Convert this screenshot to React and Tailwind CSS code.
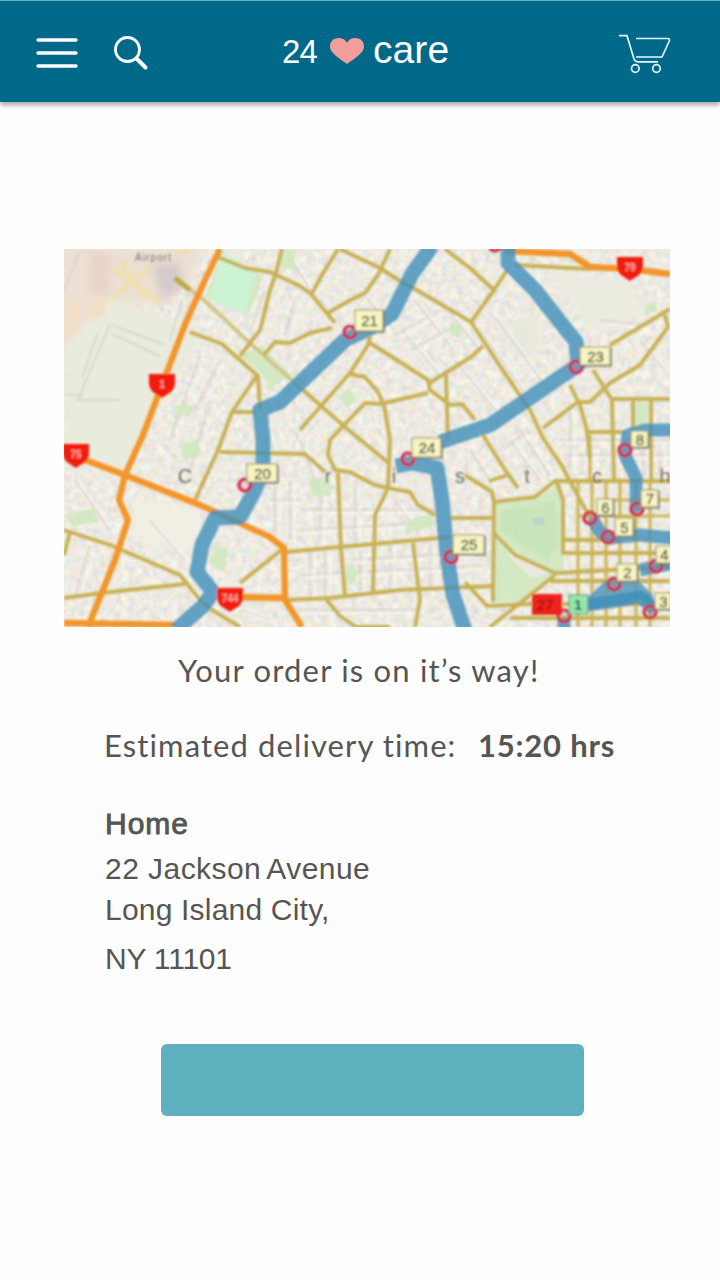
import React from "react";

const streets = [
  "M218 257L245 268L270 272L300 286L311 294L335 323",
  "M190 332L222 344L240 360L258 376L260 410",
  "M240 356L260 330L270 290L276 273L282 249",
  "M258 374L232 412L218 450L195 500",
  "M232 412H256",
  "M340 249L380 268L400 281L420 292L471 322",
  "M390 249L378 275L365 293L345 303L328 313",
  "M338 249L322 275L312 293",
  "M264 355L275 342L290 343L310 333L332 328",
  "M370 336L368 345L350 373L320 407L300 430",
  "M370 343L400 362L428 380L430 390L450 405L462 404L475 420",
  "M428 384L471 357L483 346",
  "M446 375L448 440",
  "M350 374L365 377L378 392L384 405L390 440L388 488L375 515L373 592",
  "M428 393L380 404L365 403L345 424L330 440L328 455L335 470L350 472L375 485L388 488L410 492L418 505L435 515",
  "M303 390L345 427L390 464",
  "M445 249L470 268L494 290L471 322L500 366L530 410L543 438L562 466L580 500L592 520",
  "M494 290L507 270",
  "M515 265L590 269",
  "M610 345L665 312L670 309",
  "M665 315L668 327L640 365L610 383L590 402L578 402L543 428",
  "M593 370L612 400L614 481",
  "M570 385L580 405L587 430L590 460",
  "M613 399H670", "M633 400V430", "M651 400V480", "M585 432H625",
  "M64 530L110 545L180 575L200 600L212 610L240 627",
  "M64 598L110 592L185 584",
  "M220 452L305 454L325 472",
  "M64 555L70 532",
  "M240 583L285 547",
  "M338 473L341 550L345 595",
  "M285 552L340 547L450 537",
  "M285 600L330 598L400 590L493 586",
  "M413 543L420 600L415 627",
  "M325 598L340 616L356 627H390",
  "M450 518H494",
  "M483 435L505 470L518 488",
  "M489 481L508 475",
  "M465 475L492 492L494 502L493 602",
  "M494 502L535 497L555 481H670",
  "M493 532L515 555L555 573L670 567",
  "M555 575L520 603L490 627",
  "M465 582L487 606L530 604H670",
  "M557 483L563 500V553H670",
  "M563 540H620", "M550 581H670", "M510 618H670",
];

const gridStreets = "M578 482V627M592 482V627M606 482V627M620 482V627M636 482V627M650 482V627M590 435V482M600 500H670M578 516H670";

const laneways =
  "M285 249L310 290M300 440L322 500M360 290L395 330M402 330L440 375M400 410L435 430M300 510H440M300 530L440 522M350 560L470 553M300 575L480 566M310 550V598M325 550V598M360 550V592M390 545V590M430 540V588M395 500L420 535M455 360L500 415M480 330L530 400M490 310L545 385M500 450L530 430M470 450L490 480M510 440L540 480M520 430L550 475M570 410V470M600 380L640 410M640 340L665 370M600 320L640 325M150 520L185 560M75 480L110 530M90 545L75 595M120 590L160 615M210 400L190 470M200 355L170 440M220 360L195 410M265 290L250 330M295 300L285 335M320 300L350 325M560 440H670M565 455H670M625 440V480M643 440V480M660 440V480M640 400V430M440 300L480 350M415 300L450 345M395 335L440 310M410 350L455 325M475 300L510 330M520 395L560 370M275 480V535M290 480V540M270 500H300M320 480V540M355 480V545M580 490L560 500M500 610L540 625M440 600L490 620M240 610L270 620M300 610H420";

const orangeRoads = [
  "M220 249L204 282L186 322L162 385L143 435L125 475L119 500L128 520L115 560L88 627",
  "M64 452L125 475L200 505L270 537L284 548L285 600L302 627",
  "M230 597L285 598",
  "M64 623L175 625",
  "M505 251L570 254L590 267L630 269L670 274",
];

const routes = [
  "M432 246L412 274L392 314L372 327L345 340L280 402L260 410L263 440L263 470L255 490L240 517L215 518L202 545L197 572L213 592L203 606L176 630",
  "M508 246V263L535 290L576 342L578 365L490 425L440 442",
  "M396 466L412 463L437 468L442 500L447 555L453 595L465 630",
];

const cityRoutes = [
  "M672 430L645 430L628 435L625 455L636 478V512",
  "M592 518L600 532L610 538L640 535L672 538",
  "M578 606L610 602L640 597L655 610",
  "M640 570L670 564",
  "M564 618V630",
];

const greens = [
  "M222 252L240 262L262 276L255 300L248 314L225 308L206 296Z",
  "M240 355L262 346L276 360L292 375L270 388L262 374Z",
  "M496 504L535 499L557 485L563 504V570L520 602H495Z",
  "M281 249H296L294 270L280 266Z",
  "M338 396L350 388L357 400L347 408Z",
  "M308 478H330V496H312Z",
  "M408 520L430 514L436 526L405 534Z",
  "M634 402H648V428H634Z",
  "M64 515L95 508L98 522L72 526Z",
  "M180 444L198 440L202 455L184 460Z",
  "M214 545L228 550L224 572L210 565Z",
  "M350 562L358 572L352 586L342 580Z",
  "M176 405H195L190 416H176Z",
  "M644 305L655 302L657 310L646 314Z",
  "M450 322L462 326L460 338L450 335Z",
];

const stops = [
  [350, 332], [576, 367], [408, 459], [245, 485], [451, 557], [625, 450], [637, 509],
  [590, 518], [608, 537], [656, 566], [614, 584], [650, 612], [564, 616], [495, 245],
];

const labels = [
  ["21", 355, 310, 29, 22], ["23", 580, 347, 31, 19], ["24", 412, 438, 30, 20],
  ["20", 247, 464, 31, 19], ["25", 453, 535, 32, 20], ["8", 631, 431, 18, 17],
  ["7", 641, 490, 18, 18], ["6", 597, 499, 17, 17], ["5", 615, 518, 19, 19],
  ["2", 617, 564, 21, 18], ["3", 655, 593, 17, 17], ["4", 656, 546, 17, 18],
];

const shields = [["1", 162, 384], ["79", 630, 267], ["75", 76, 454], ["744", 230, 598]];

const places = [["C", 185], ["r", 328], ["i", 394], ["s", 460], ["t", 527], ["c", 597], ["h", 665]];

function RouteMap() {
  return (
    <svg viewBox="64 249 606 378" className="block h-[378px] w-[606px]" role="img">
      <defs>
        <filter id="soft" filterUnits="userSpaceOnUse" x="44" y="229" width="646" height="418">
          <feGaussianBlur stdDeviation="1.15" />
        </filter>
        <filter id="haze" filterUnits="userSpaceOnUse" x="44" y="229" width="646" height="418">
          <feGaussianBlur stdDeviation="4" />
        </filter>
        <filter id="speckle" filterUnits="userSpaceOnUse" x="44" y="229" width="646" height="418">
          <feTurbulence type="fractalNoise" baseFrequency="0.14" numOctaves="2" seed="8" />
          <feColorMatrix values="0.5 0.1 0 0 0.57  0.1 0.42 0 0 0.59  0.1 0.15 0.5 0 0.42  0 0 0 0 1" />
        </filter>
      </defs>
      <rect x="64" y="249" width="606" height="378" fill="#e9e6d9" />
      <rect x="64" y="249" width="606" height="378" filter="url(#speckle)" opacity="0.7" />
      <g filter="url(#haze)">
        <path d="M64 290L112 300L205 330L160 395L138 445L120 468L64 445Z" fill="#e9ebdc" />
        <path d="M54 240H205L190 285L165 305L105 300L64 345H54Z" fill="#ecdfd3" />
        <path d="M92 249L110 255L108 295L88 292Z" fill="#e8d3cb" />
        <path d="M152 265L180 262L182 290L162 300Z" fill="#d5cacc" />
        <path d="M135 498L200 508L196 548L150 549L133 530Z" fill="#f0efe2" />
        <path d="M550 272L620 280L640 300L630 325L585 325Z" fill="#ecebdf" />
        <path d="M495 330L535 310L545 345L515 355Z" fill="#e8e9dc" />
      </g>
      <g filter="url(#soft)">
        <path d="M112 268L160 302M112 298L150 268M120 260L145 298M175 252H188" stroke="#f0dfa5" strokeWidth="5" fill="none" opacity=".75" />
        <path d="M64 310L80 296V328L64 343ZM90 305L105 292V315L84 322Z" fill="#f2ddc4" opacity=".8" />
        <path d="M112 325L165 345M112 334L160 356M110 325L84 385L78 400H120M98 332L82 378M64 395H84M64 290L80 252M190 300L178 345M182 300L170 340" stroke="#d3d5ca" strokeWidth="1.5" fill="none" />
        <path d={laneways} stroke="#d5d0ce" strokeWidth="2" fill="none" opacity=".75" />
        <path d={laneways} transform="translate(5 3)" stroke="#fbfaf5" strokeWidth="2" fill="none" opacity=".6" />
        {greens.map((d) => <path key={d} d={d} fill="#cfe8bd" opacity=".85" />)}
        <path d="M222 252L240 262L255 274L246 312L225 308L210 296Z" fill="#cdf3d5" />
        <path d="M502 510L540 505L555 500L558 545L548 560L520 545L500 530Z" fill="#c5e3b7" opacity=".7" />
        <path d="M533 518H545V525H533Z" fill="#b5d6c9" />
        <path d="M506 552L540 567L548 574L532 578L512 560Z" fill="#ebe9dc" />
        <path d="M175 278L204 300L250 343L305 392" stroke="#d1c589" strokeWidth="4" fill="none" />
        <path d="M175 278L190 290" stroke="#bda946" strokeWidth="5" fill="none" />
        <path d={gridStreets} stroke="#cfb65c" strokeWidth="3.2" fill="none" />
        {streets.map((d) => (
          <path key={d} d={d} stroke="#c7b154" strokeWidth="3.9" strokeLinejoin="round" fill="none" />
        ))}
        {orangeRoads.map((d) => (
          <path key={d} d={d} stroke="#f2952a" strokeWidth="6.3" strokeLinejoin="round" fill="none" />
        ))}
        <path d="M585 600L606 580L640 582L652 594L658 612L640 600L590 610Z" fill="#5499bb" opacity=".85" />
        {routes.map((d) => (
          <path key={d} d={d} stroke="#3f8fba" strokeWidth="15" strokeLinejoin="round" fill="none" opacity=".8" />
        ))}
        {cityRoutes.map((d) => (
          <path key={d} d={d} stroke="#3f8fba" strokeWidth="13" strokeLinejoin="round" fill="none" opacity=".8" />
        ))}
        {stops.map(([x, y]) => (
          <circle key={`${x}-${y}`} cx={x} cy={y} r="6" fill="#c96a80" fillOpacity=".25" stroke="#cc2f4e" strokeWidth="3.2" />
        ))}
        {shields.map(([name, x, y]) => (
          <g key={name}>
            <path d={`M${x - 13} ${y - 10}H${x + 13}V${y - 1}C${x + 13} ${y + 8} ${x + 5} ${y + 10} ${x} ${y + 14}C${x - 5} ${y + 10} ${x - 13} ${y + 8} ${x - 13} ${y - 1}Z`} fill="#f11b0c" />
            <text x={x} y={y + 4} textAnchor="middle" fontSize="10" fontWeight="700" fill="#ffab9d">{name}</text>
          </g>
        ))}
        {labels.map(([name, x, y, w, h]) => (
          <g key={name}>
            <rect x={x + 1} y={y + 1} width={w} height={h} fill="#77776a" opacity=".7" />
            <rect x={x} y={y} width={w - 1} height={h - 1} fill="#f8f5bf" stroke="#8b8b76" strokeWidth="1" />
            <text x={x + w / 2} y={y + h / 2 + 5} textAnchor="middle" fontSize="15" fill="#4d5146" stroke="#4d5146" strokeWidth=".3">{name}</text>
          </g>
        ))}
        <rect x="532" y="594" width="30" height="21" fill="#ef211b" />
        <text x="545" y="610" textAnchor="middle" fontSize="15" fill="#7d1010">27</text>
        <rect x="569" y="595" width="19" height="19" fill="#94e7ac" stroke="#5f8d73" />
        <text x="578" y="610" textAnchor="middle" fontSize="15" fontWeight="700" fill="#2c6345">1</text>
        {places.map(([letter, x]) => (
          <text key={x} x={x} y="483" textAnchor="middle" fontSize="20" fill="#716b66">{letter}</text>
        ))}
        <text x="153" y="261" textAnchor="middle" fontSize="10" fill="#7d706e" textLength="36">Airport</text>
      </g>
    </svg>
  );
}

function Header() {
  return (
    <header className="grid h-[102px] grid-cols-[282px_1fr_102px] items-start border-t border-[#69afc2] bg-[#006989] text-white shadow-[0_3px_5px_rgba(0,0,0,0.35)]">
      <div className="flex pt-[34px] pl-9">
        <svg viewBox="0 0 42 36" className="h-9 w-[42px]" fill="none" stroke="currentColor" strokeWidth="3.4" strokeLinecap="round">
          <path d="M2 5H40M2 18H40M2 31H40" />
        </svg>
        <svg viewBox="0 0 36 36" className="ml-[35px] h-9 w-9" fill="none" stroke="currentColor" strokeLinecap="round">
          <circle cx="14.5" cy="14.5" r="12" strokeWidth="2.8" />
          <path d="M23.5 23.5L32.5 32.5" strokeWidth="4" />
        </svg>
      </div>
      <div className="flex items-baseline pt-[25px] leading-[48px]">
        <span className="text-[33px] tracking-[-0.9px]">24</span>
        <svg viewBox="0 0 34 26" className="ml-[13px] h-[26px] w-[34px] translate-y-px" fill="#f39e9c">
          <path d="M17 26C9 20 0 15 0 8.5C0 3.5 3.5 0 8.5 0C12.5 0 15.5 1.8 17 4.7C18.5 1.8 21.5 0 25.5 0C30.5 0 34 3.5 34 8.5C34 15 25 20 17 26Z" />
        </svg>
        <span className="ml-[9px] text-[39px] tracking-[0.1px]">care</span>
      </div>
      <svg viewBox="618 33 54 42" className="mt-8 h-[42px] w-[54px]" fill="none" stroke="#e3f8fc" strokeWidth="1.7" strokeLinejoin="round">
        <path d="M619 35.7H627L634 59Q635.2 61.8 638 61.8H658" />
        <path d="M636 38.5H668Q670 38.5 669.3 41L662 57H636" />
        <circle cx="635.3" cy="68.5" r="3.8" />
        <circle cx="656.5" cy="68.5" r="3.8" />
      </svg>
    </header>
  );
}

export default function App() {
  return (
    <main className="flex h-[1280px] w-[720px] flex-col overflow-hidden bg-[#fefefe] font-['Liberation_Sans',sans-serif] text-[#555]">
      <Header />
      <div className="mt-[147px] ml-16">
        <RouteMap />
      </div>
      <p className="mt-[22px] ml-[178px] font-['Lato',sans-serif] text-[31px] leading-[42px] tracking-[1.2px] whitespace-nowrap">Your order is on it’s way!</p>
      <p className="mt-[33px] ml-[104px] flex font-['Lato',sans-serif] text-[31px] leading-[42px] whitespace-nowrap">
        <span className="w-[374px] tracking-[1.1px]">Estimated delivery time:</span>
        <strong className="tracking-[0.8px]">15:20 hrs</strong>
      </p>
      <address className="mt-[37px] ml-[105px] flex flex-col text-[30px] leading-[42px] not-italic whitespace-nowrap">
        <strong className="font-normal tracking-[1px] [-webkit-text-stroke:0.9px_#555]">Home</strong>
        <span className="mt-[3px] flex tracking-[0.45px]">
          <span>22 Jackson</span>
          <span className="ml-[5px]">Avenue</span>
        </span>
        <span className="-mt-px tracking-[0.2px]">Long Island City,</span>
        <span className="mt-[7px] tracking-[-0.2px]">NY 11101</span>
      </address>
      <button aria-label="Continue" className="mt-[64px] ml-[161px] h-[71.5px] w-[422.5px] shrink-0 rounded-[6px] bg-[#5eb0be]" />
    </main>
  );
}
